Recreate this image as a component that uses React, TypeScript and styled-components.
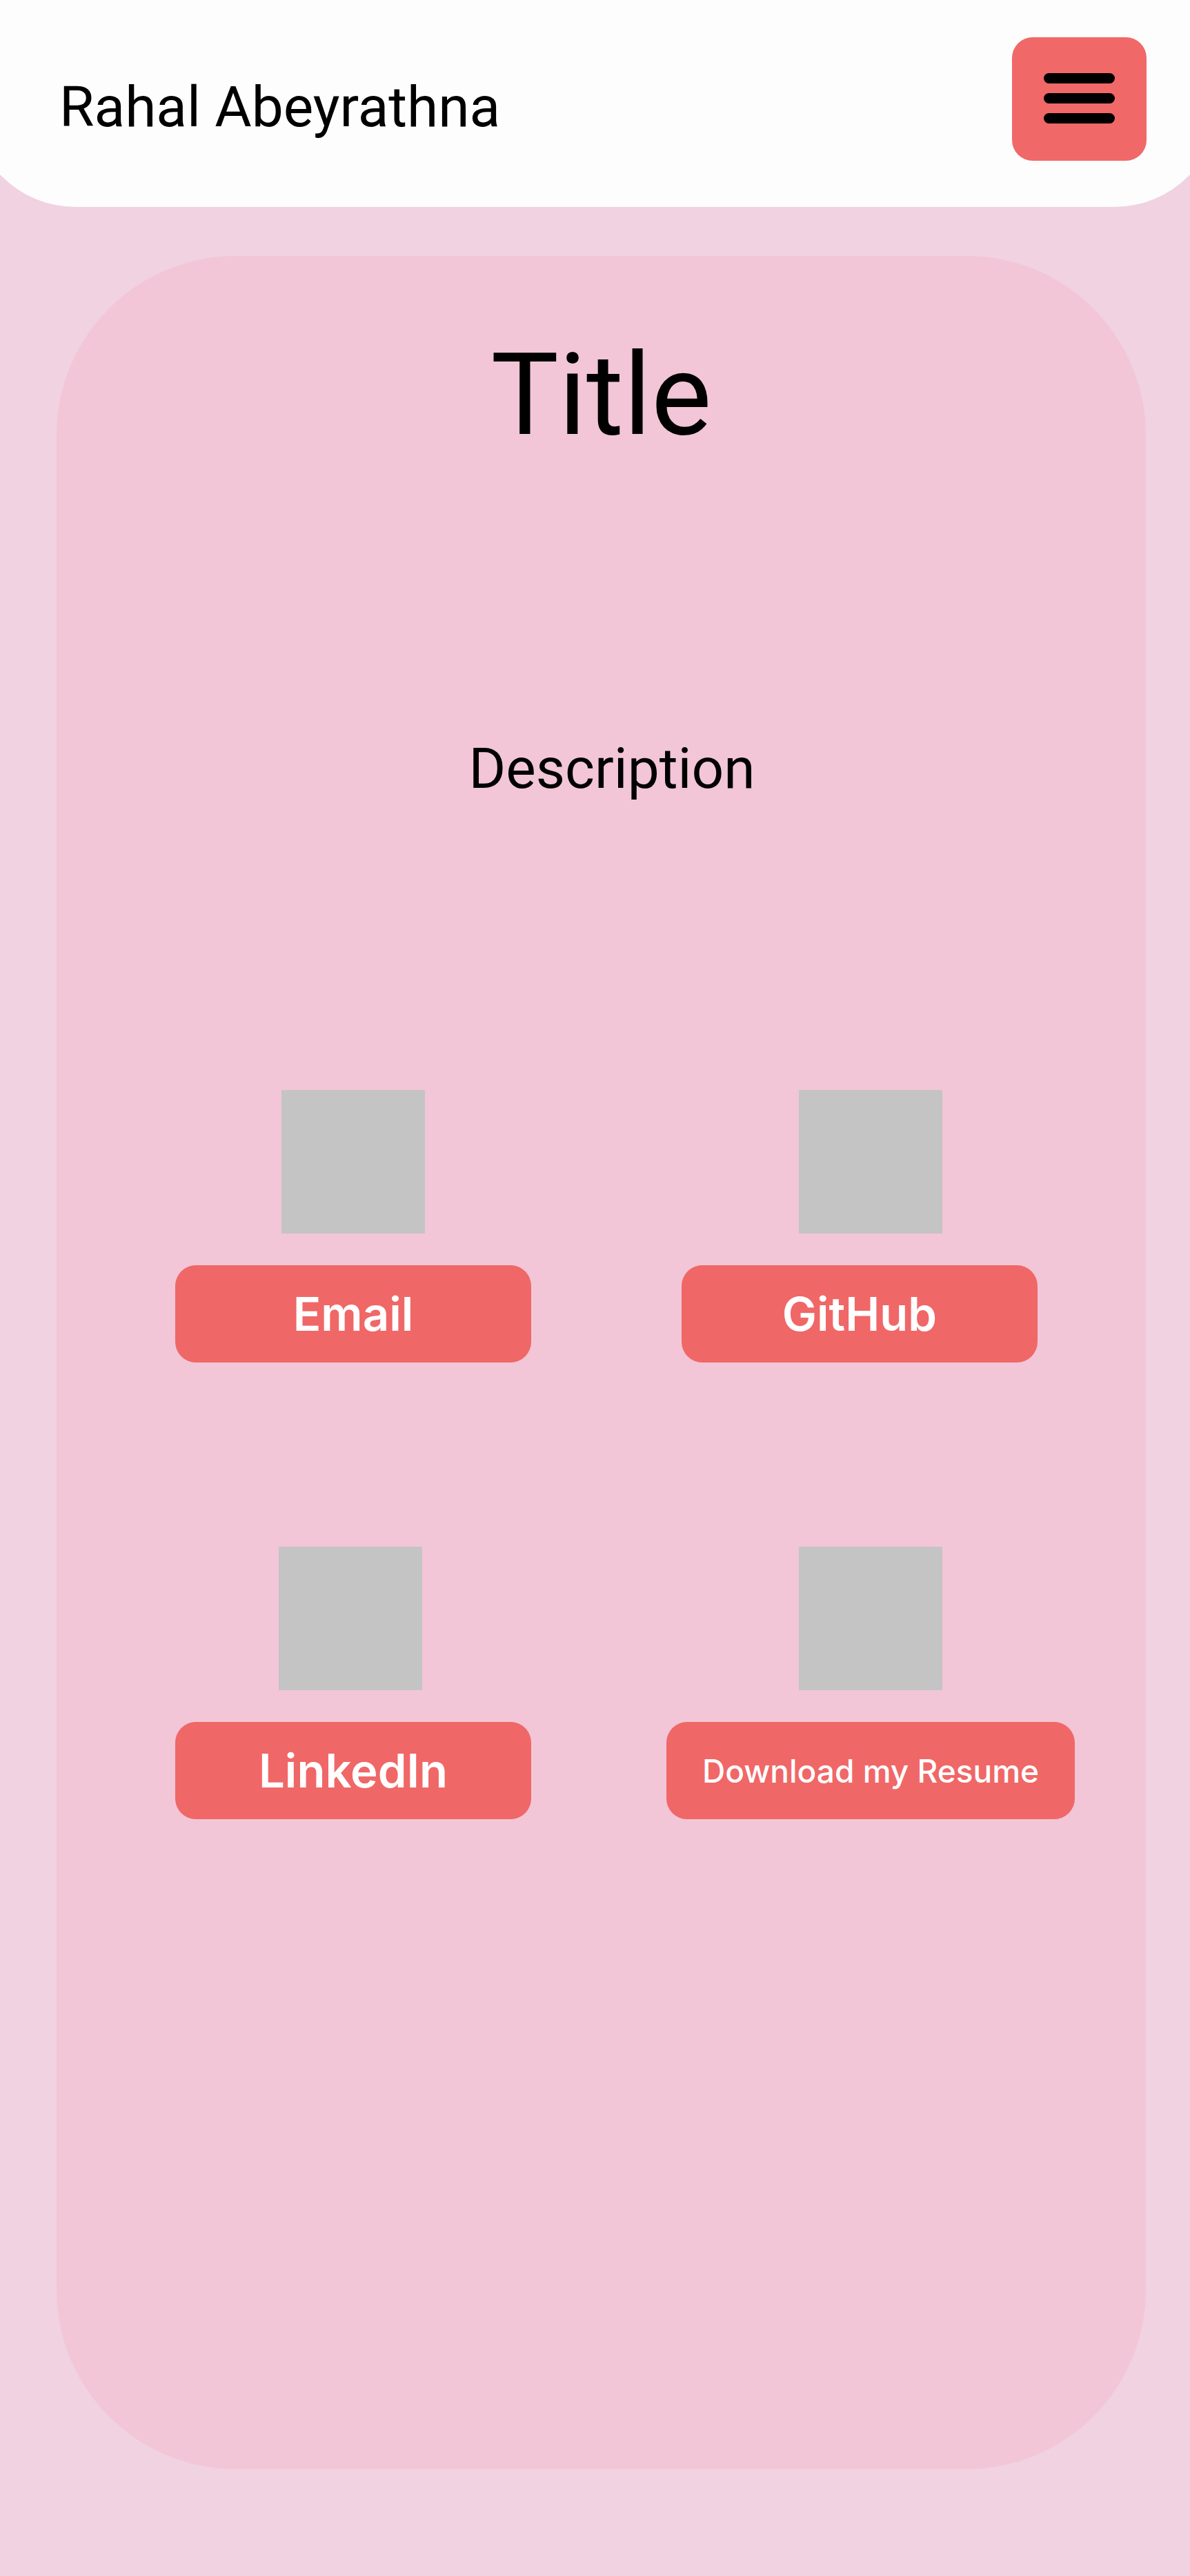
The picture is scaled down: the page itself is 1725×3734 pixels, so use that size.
import React from "react";
import styled, { createGlobalStyle } from "styled-components";

const GlobalStyle = createGlobalStyle`
  html, body {
    margin: 0;
    padding: 0;
    background: #f0d2e1;
  }
  body {
    overflow-x: hidden;
    min-height: 100vh;
    font-family: Roboto, "Liberation Sans", sans-serif;
  }
  * { box-sizing: border-box; }
`;

const Page = styled.div`
  min-height: 3734px;
  background: #f0d2e1;
  display: flex;
  flex-direction: column;
`;

const Header = styled.header`
  height: 300px;
  margin: 0 -42px;
  padding: 54px 105px 0 128px;
  background: #fdfdfd;
  border-radius: 0 0 152px 152px;
  display: flex;
  justify-content: space-between;
  align-items: flex-start;
`;

const Brand = styled.div`
  margin-top: 60px;
  font-family: Roboto, "Liberation Sans", sans-serif;
  font-size: 82px;
  line-height: 1;
  color: #000;
  white-space: nowrap;
`;

const MenuButton = styled.button`
  width: 195px;
  height: 179px;
  border: none;
  border-radius: 30px;
  background: #f16868;
  display: flex;
  flex-direction: column;
  align-items: center;
  justify-content: center;
  gap: 14px;
  padding: 0 0 2px 0;
  cursor: pointer;
`;

const MenuLine = styled.span`
  display: block;
  width: 103px;
  height: 15px;
  border-radius: 8px;
  background: #000;
`;

const Card = styled.main`
  margin: 71px 64px 0 82px;
  height: 3208px;
  border-radius: 260px;
  background: #f2c6d6;
  padding-top: 119px;
  display: flex;
  flex-direction: column;
`;

const Title = styled.h1`
  margin: 0;
  text-align: center;
  font-family: Roboto, "Liberation Sans", sans-serif;
  font-weight: 400;
  font-size: 165px;
  line-height: 1;
  color: #000;
`;

const Content = styled.section`
  padding-left: 31px;
  display: flex;
  flex-direction: column;
  align-items: center;
`;

const Description = styled.p`
  margin: 418px 0 0 0;
  text-align: center;
  font-family: Roboto, "Liberation Sans", sans-serif;
  font-size: 82px;
  line-height: 1;
  color: #000;
`;

const LinkGrid = styled.div`
  margin-top: 425px;
  width: 1500px;
  display: grid;
  grid-template-columns: 750px 750px;
  row-gap: 267px;
`;

const LinkItem = styled.div`
  display: flex;
  flex-direction: column;
  align-items: center;
  gap: 46px;
`;

const Thumb = styled.div<{ $shift?: number }>`
  width: 208px;
  height: 208px;
  background: #c4c4c4;
  margin-right: ${(p) => (p.$shift ? -2 * p.$shift : 0)}px;
`;

const LinkButton = styled.button<{ $small?: boolean; $shift?: number }>`
  min-width: 516px;
  height: 141px;
  padding: 0 52px;
  border: none;
  border-radius: 30px;
  background: #f06767;
  color: #fff;
  font-family: Inter, "Noto Sans", sans-serif;
  font-weight: ${(p) => (p.$small ? 500 : 600)};
  font-size: ${(p) => (p.$small ? "46px" : "67px")};
  line-height: 1;
  white-space: nowrap;
  cursor: pointer;
  margin-right: ${(p) => (p.$shift ? -2 * p.$shift : 0)}px;
`;

type LinkDef = {
  label: string;
  small?: boolean;
  thumbShift?: number;
  buttonShift?: number;
};

const links: LinkDef[] = [
  { label: "Email" },
  { label: "GitHub", buttonShift: -16 },
  { label: "LinkedIn", thumbShift: -4 },
  { label: "Download my Resume", small: true },
];

export default function App() {
  return (
    <>
      <GlobalStyle />
      <Page>
        <Header>
          <Brand>Rahal Abeyrathna</Brand>
          <MenuButton aria-label="Menu">
            <MenuLine />
            <MenuLine />
            <MenuLine />
          </MenuButton>
        </Header>
        <Card>
          <Title>Title</Title>
          <Content>
            <Description>Description</Description>
            <LinkGrid>
              {links.map((l) => (
                <LinkItem key={l.label}>
                  <Thumb $shift={l.thumbShift} />
                  <LinkButton $small={l.small} $shift={l.buttonShift}>
                    {l.label}
                  </LinkButton>
                </LinkItem>
              ))}
            </LinkGrid>
          </Content>
        </Card>
      </Page>
    </>
  );
}
